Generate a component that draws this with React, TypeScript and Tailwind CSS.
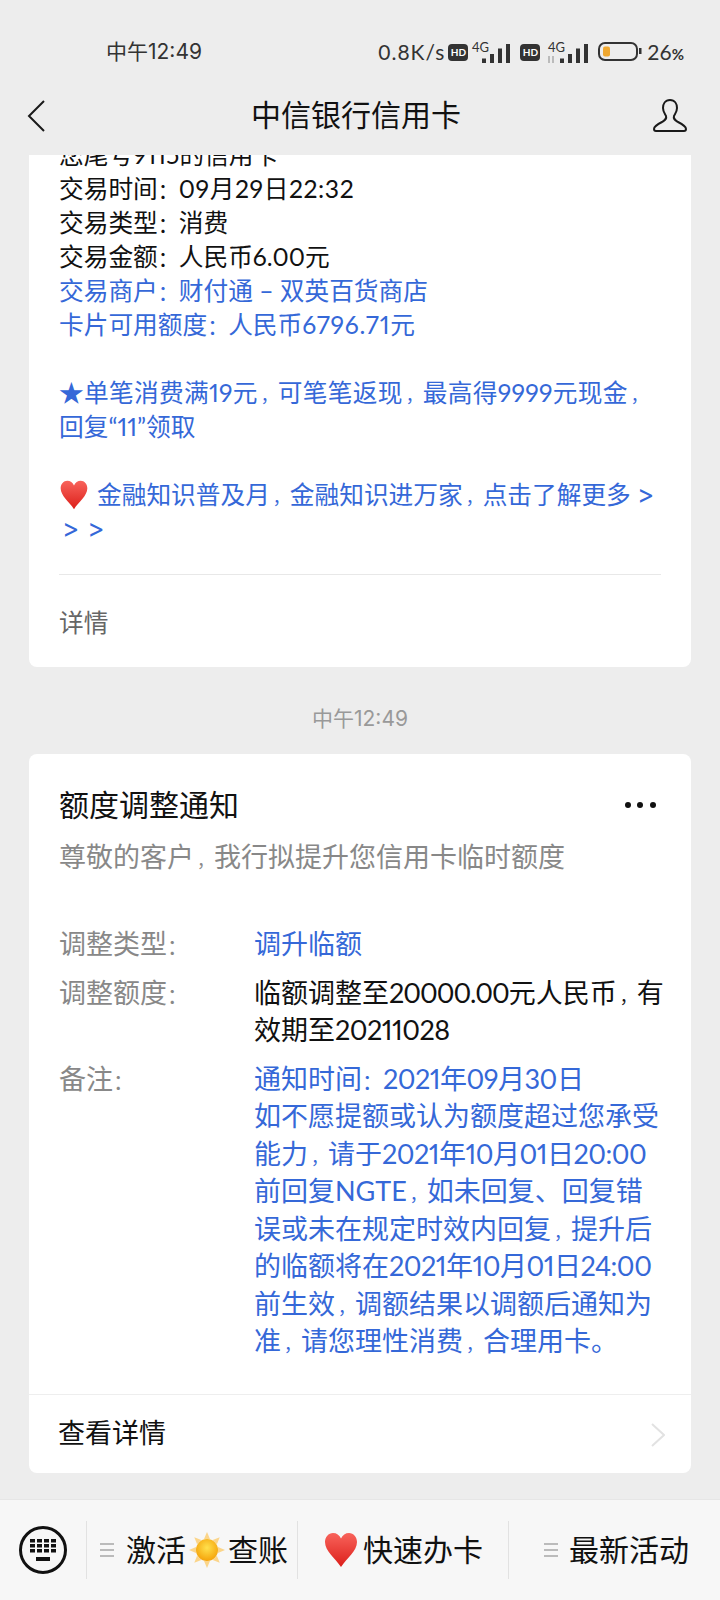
import type { ReactNode } from "react";

const cjk = "font-['Inter','Noto_Sans_CJK_SC',sans-serif]";
const body = "font-['Lato','Noto_Sans_CJK_SC',sans-serif] proportional-nums";

function C() {
  return <span className="inline-block w-[20px] pl-[3px] text-[17px] leading-none">，</span>;
}

function K() {
  return <span className="inline-block w-[21px] text-[21px] leading-none">：</span>;
}

function Gt() {
  return <span className="font-['Inter',sans-serif] text-[26px] leading-none">&gt;</span>;
}

function Signal({ arrows }: { arrows?: boolean }) {
  const x = arrows ? 12 : 10;
  return (
    <svg width="42" height="21" viewBox="0 0 42 21" className="shrink-0 overflow-visible">
      <text x="0" y="10" fontSize="13" fontFamily="Lato" fill="#333">4G</text>
      {arrows && <path d="M1 14v7M5 14v7" stroke="#aaa" strokeWidth="1.500" />}
      <rect x={x} y="16.500" width="4" height="4.500" fill="#333" />
      <rect x={x + 8} y="12" width="4" height="9" fill="#333" />
      <rect x={x + 16} y="6.500" width="4" height="14.500" fill="#333" />
      <rect x={x + 24} y="2" width="4" height="19" fill="#333" />
    </svg>
  );
}

function Hd() {
  return (
    <span className="flex h-[17px] w-[20px] shrink-0 items-center justify-center rounded-[4px] bg-[#333] font-['Lato',sans-serif] text-[10px] font-bold leading-none text-white">
      HD
    </span>
  );
}

function Heart({ size, id }: { size: number; id: string }) {
  return (
    <svg width={size} height={size} viewBox="0 0 36 36" className="inline-block shrink-0">
      <defs>
        <linearGradient id={id} x1="0" y1="0" x2="0" y2="1">
          <stop offset="0" stopColor="#f8635b" />
          <stop offset="1" stopColor="#dc1f1a" />
        </linearGradient>
      </defs>
      <path
        d="M18 35C12 26 2 19 2 10 2 5 5.500 1 10 1c3.500 0 6.500 2 8 5.500C19.500 3 22.500 1 26 1c4.500 0 8 4 8 9 0 9-10 16-16 25z"
        fill={`url(#${id})`}
      />
    </svg>
  );
}

function Sun() {
  const rays = [0, 45, 90, 135, 180, 225, 270, 315];
  return (
    <svg width="36" height="36" viewBox="0 0 36 36" className="shrink-0">
      <defs>
        <radialGradient id="s" cx="0.5" cy="0.4" r="0.6">
          <stop offset="0" stopColor="#ffe14d" />
          <stop offset="1" stopColor="#f5a30a" />
        </radialGradient>
      </defs>
      {rays.map((r) => (
        <path key={r} d="M15 7 18 0l3 7z" fill="#fbd58a" transform={`rotate(${r} 18 18)`} />
      ))}
      <circle cx="18" cy="18" r="11" fill="url(#s)" />
    </svg>
  );
}

function Bars() {
  return (
    <svg width="14" height="14" viewBox="0 0 14 14" className="shrink-0">
      <path d="M0 1h14M0 7h14M0 13h14" stroke="#bbb" strokeWidth="2" />
    </svg>
  );
}

function Row({ label, children, blue }: { label: string; children: ReactNode; blue?: boolean }) {
  return (
    <div className="flex whitespace-nowrap">
      <div className="w-[195px] shrink-0 text-[#888]">
        {label}
        <K />
      </div>
      <div className={blue ? "w-[400px] text-[#3568d8]" : "w-[400px]"}>{children}</div>
    </div>
  );
}

export default function App() {
  return (
    <div className={`flex h-[1600px] w-[720px] flex-col overflow-hidden bg-[#ededed] text-[#111] ${cjk}`}>
      <div className="flex h-[76px] shrink-0 items-center justify-between pl-[106px] pr-[36px] pt-[28px] text-[#333]">
        <span className="text-[21px]">中午12:49</span>
        <div className="flex items-center font-['Lato',sans-serif] text-[21px]">
          <span className="tracking-[1px]">0.8K/s</span>
          <span className="ml-[3px]"><Hd /></span>
          <span className="ml-[4px]"><Signal /></span>
          <span className="ml-[6px]"><Hd /></span>
          <span className="ml-[8px]"><Signal arrows /></span>
          <svg width="44" height="20" viewBox="0 0 44 20" className="ml-[8px] shrink-0">
            <rect x="1" y="1" width="38" height="17" rx="6" fill="none" stroke="#333" strokeWidth="2" />
            <rect x="5" y="4.500" width="7" height="10" rx="2" fill="#f0a830" />
            <rect x="41" y="6" width="2.500" height="6" fill="#333" />
          </svg>
          <span className="ml-[5px]">26<span className="text-[15px] font-bold">%</span></span>
        </div>
      </div>

      <div className="flex h-[79px] shrink-0 items-center pl-[27px] pr-[33px]">
        <div className="w-[40px] shrink-0">
          <svg width="18" height="32" viewBox="0 0 18 32">
            <path d="M17 1 2 16l15 15" fill="none" stroke="#1a1a1a" strokeWidth="2" />
          </svg>
        </div>
        <span className="flex-1 text-center text-[30px]">中信银行信用卡</span>
        <div className="flex w-[42px] shrink-0 justify-end">
          <svg width="34" height="33" viewBox="0 0 34 33">
            <path
              d="M17 1C12 1 10 5 10 9C10 13 12 15 13 17C14 20 12 21 9 23C5 25 1 27 1 30C1 31.500 2 32 3 32H31C32 32 33 31.500 33 30C33 27 29 25 25 23C22 21 20 20 21 17C22 15 24 13 24 9C24 5 22 1 17 1Z"
              fill="none"
              stroke="#1a1a1a"
              strokeWidth="2"
            />
          </svg>
        </div>
      </div>

      <main className="flex flex-1 flex-col px-[29px]">
        <section className={`h-[512px] shrink-0 overflow-hidden rounded-b-[8px] bg-white px-[30px] ${body}`}>
          <div className="-mt-[17px] whitespace-nowrap text-[24.700px] leading-[34px]">
            <div>您尾号9115的信用卡</div>
            <div>交易时间<K /><span className="tracking-[0.6px]">09月29日22:32</span></div>
            <div>交易类型<K />消费</div>
            <div>交易金额<K />人民币6.00元</div>
            <div className="text-[#3568d8]">交易商户<K />财付通 – 双英百货商店</div>
            <div className="text-[#3568d8]">卡片可用额度<K />人民币<span className="tracking-[0.8px]">6796.71</span>元</div>
            <div className="h-[34px]" />
            <div className="tracking-[0.3px] text-[#3568d8]">★单笔消费满19元<C />可笔笔返现<C />最高得9999元现金<C /></div>
            <div className="text-[#3568d8]">回复“11”领取</div>
            <div className="h-[34px]" />
            <div className="flex h-[34px] items-center gap-[8px] text-[#3568d8]">
              <Heart size={30} id="h1" />
              <span>金融知识普及月<C />金融知识进万家<C />点击了解更多 <Gt /></span>
            </div>
            <div className="flex h-[34px] items-center gap-[8px] pl-[3px] text-[#3568d8]"><Gt /><Gt /></div>
          </div>
          <div className="mt-[28px] h-px bg-[#e8e8e8]" />
          <div className="mt-[31px] text-[24.700px] leading-[34px] text-[#666]">详情</div>
        </section>

        <div className="flex h-[87px] shrink-0 items-center justify-center pt-[16px] text-[21px] text-[#999]">中午12:49</div>

        <section className="h-[719px] shrink-0 rounded-[8px] bg-white">
          <div className="flex items-center justify-between pl-[30px] pr-[34px] pt-[32px]">
            <span className="text-[30px] leading-[38px]">额度调整通知</span>
            <svg width="33" height="8" viewBox="0 0 33 8"><circle cx="4" cy="4" r="3" fill="#111" /><circle cx="16" cy="4" r="3" fill="#111" /><circle cx="29" cy="4" r="3" fill="#111" /></svg>
          </div>
          <div className="mt-[16px] whitespace-nowrap pl-[30px] text-[27px] leading-[36px] text-[#888]">尊敬的客户<C />我行拟提升您信用卡临时额度</div>
          <div className={`mt-[49px] flex flex-col gap-[11px] px-[30px] text-[27px] leading-[37.500px] ${body}`}>
            <Row label="调整类型" blue>调升临额</Row>
            <Row label="调整额度">临额调整至<span className="tracking-[-1px]">20000.00</span>元人民币<C />有<br />效期至<span className="tracking-[-0.5px]">20211028</span></Row>
            <Row label="备注" blue>
              通知时间<K /><span className="tracking-[-0.5px]">2021年09月30日</span><br />
              如不愿提额或认为额度超过您承受<br />
              能力<C />请于<span className="tracking-[-0.5px]">2021年10月01日20:00</span><br />
              前回复NGTE<C />如未回复、回复错<br />
              误或未在规定时效内回复<C />提升后<br />
              的临额将在<span className="tracking-[-0.5px]">2021年10月01日24:00</span><br />
              前生效<C />调额结果以调额后通知为<br />
              准<C />请您理性消费<C />合理用卡。
            </Row>
          </div>
          <div className="mt-[34px] h-px bg-[#eeeeee]" />
          <div className="flex h-[77px] items-center justify-between pl-[29px] pr-[26px] pt-[3px] text-[27px]">
            <span>查看详情</span>
            <svg width="14" height="24" viewBox="0 0 14 24"><path d="M1 1l12 11L1 23" fill="none" stroke="#e2e2e2" strokeWidth="2" /></svg>
          </div>
        </section>
      </main>

      <footer className="flex h-[101px] shrink-0 items-center border-t border-[#e6e6e6] bg-[#f7f7f7] text-[30px]">
        <div className="flex h-[58px] w-[87px] items-center justify-center border-r border-[#e2e2e2]">
          <svg width="48" height="48" viewBox="0 0 48 48">
            <circle cx="24" cy="24" r="22.500" fill="none" stroke="#111" strokeWidth="3" />
            <g fill="#111">
              <rect x="11" y="13" width="5" height="3.500" /><rect x="18" y="13" width="5" height="3.500" /><rect x="25" y="13" width="5" height="3.500" /><rect x="32" y="13" width="5" height="3.500" />
              <rect x="11" y="18" width="5" height="3.500" /><rect x="18" y="18" width="5" height="3.500" /><rect x="25" y="18" width="5" height="3.500" /><rect x="32" y="18" width="5" height="3.500" />
              <rect x="11" y="23" width="5" height="3.500" /><rect x="18" y="23" width="5" height="3.500" /><rect x="25" y="23" width="5" height="3.500" /><rect x="32" y="23" width="5" height="3.500" />
              <rect x="17" y="31" width="14" height="4" />
            </g>
          </svg>
        </div>
        <div className="flex h-[58px] w-[211px] items-center justify-center gap-[3px] border-r border-[#e2e2e2] pl-[4px]">
          <Bars /><span className="ml-[9px]">激活</span><Sun /><span>查账</span>
        </div>
        <div className="flex h-[58px] w-[211px] items-center justify-center gap-[4px] border-r border-[#e2e2e2]">
          <Heart size={36} id="h2" /><span>快速办卡</span>
        </div>
        <div className="flex h-[58px] w-[211px] items-center justify-center gap-[11px] pl-[4px]">
          <Bars /><span>最新活动</span>
        </div>
      </footer>
    </div>
  );
}
